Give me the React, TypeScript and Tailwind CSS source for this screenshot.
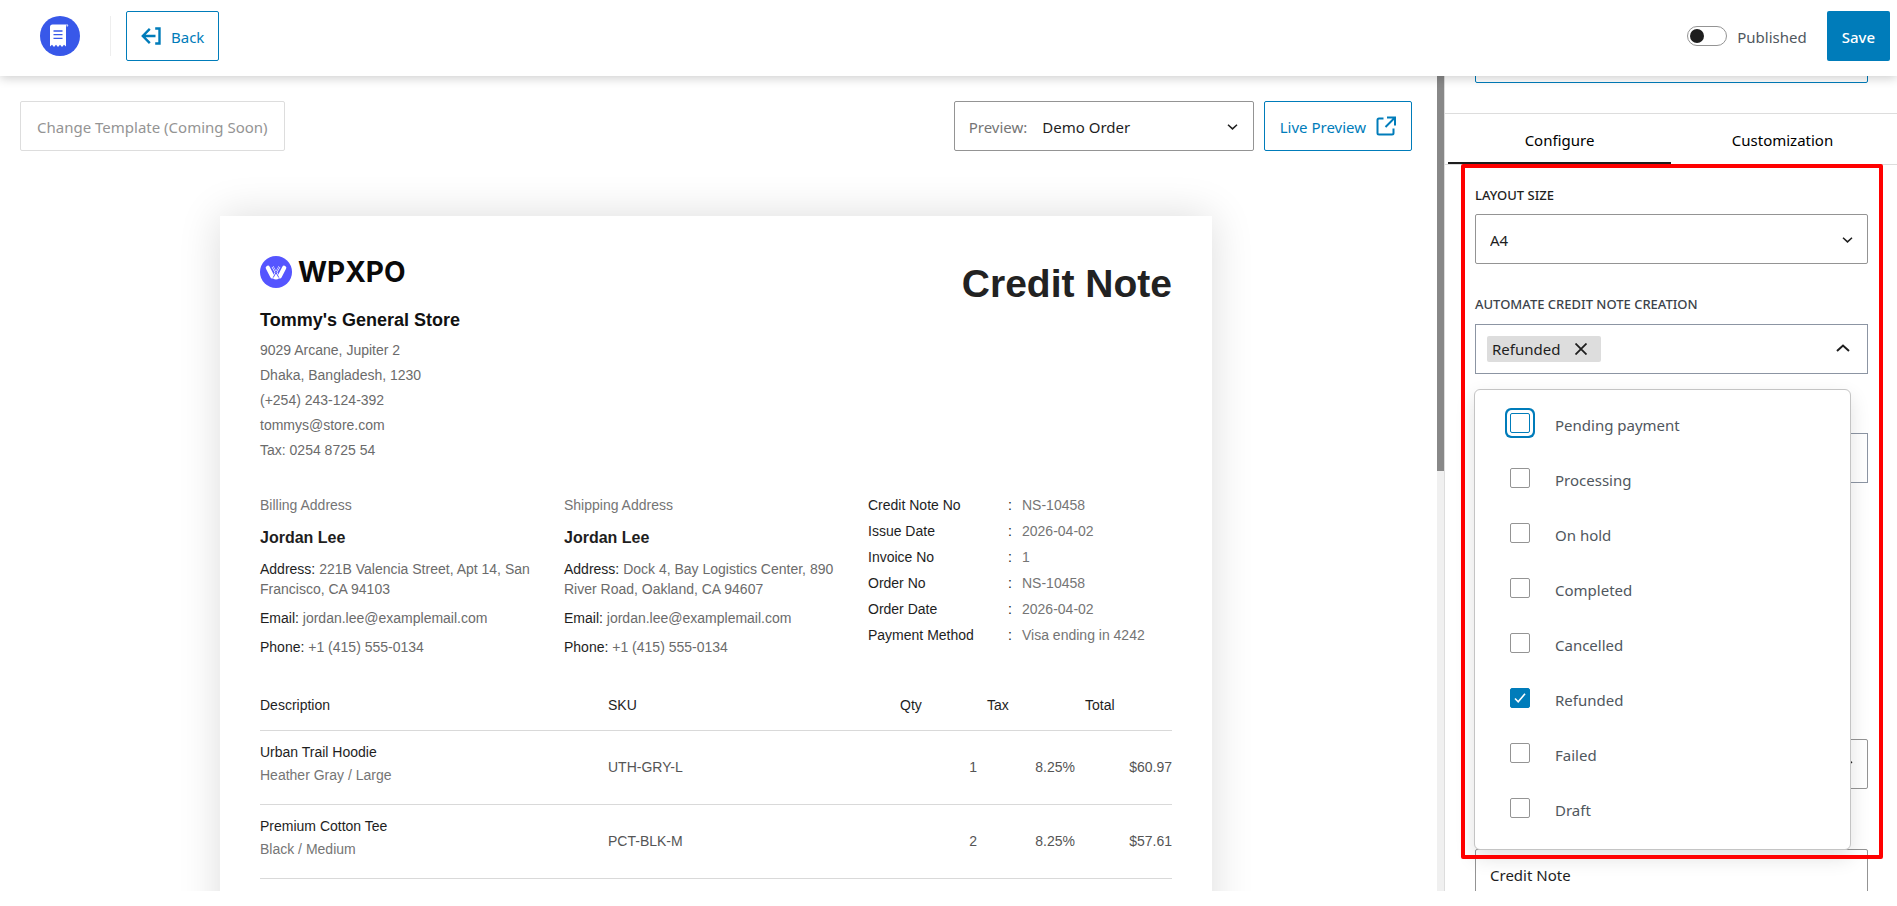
import { useState } from 'react';

const statuses = [
  'Pending payment',
  'Processing',
  'On hold',
  'Completed',
  'Cancelled',
  'Refunded',
  'Failed',
  'Draft',
];

const storeLines = [
  '9029 Arcane, Jupiter 2',
  'Dhaka, Bangladesh, 1230',
  '(+254) 243-124-392',
  'tommys@store.com',
  'Tax: 0254 8725 54',
];

const noteDetails = [
  ['Credit Note No', 'NS-10458'],
  ['Issue Date', '2026-04-02'],
  ['Invoice No', '1'],
  ['Order No', 'NS-10458'],
  ['Order Date', '2026-04-02'],
  ['Payment Method', 'Visa ending in 4242'],
];

const items = [
  { name: 'Urban Trail Hoodie', variant: 'Heather Gray / Large', sku: 'UTH-GRY-L', qty: 1, tax: '8.25%', total: '$60.97' },
  { name: 'Premium Cotton Tee', variant: 'Black / Medium', sku: 'PCT-BLK-M', qty: 2, tax: '8.25%', total: '$57.61' },
];

function LogoIcon() {
  return (
    <svg viewBox="0 0 40 40" className="size-10" aria-hidden="true">
      <circle cx="20" cy="20" r="20" fill="#3858e9" />
      <path d="M10 11Q10 8.500 12.500 8.500H27Q25.800 9.500 26 12V30.500L24 28.800L22 31L20 28.800L18 31L16 28.800L14 31L12 28.800L10 30.500Z" fill="#fff" />
      <path d="M27 8.500Q28.500 9 27.300 10.500" stroke="#fff" strokeWidth="1" fill="none" />
      <path d="M13.500 15H22.500M13.500 18.700H22.500M13.500 22.400H22.500" stroke="#3858e9" strokeWidth="1.300" />
    </svg>
  );
}

function BackIcon() {
  return (
    <svg viewBox="0 0 20 20" className="size-5" fill="none" stroke="currentColor" strokeWidth="2.400" aria-hidden="true">
      <path d="M14.500 10H1.500M8.800 2.800L1.800 10L8.800 17.200M14.200 2.500H18.500V17.500H14.200" />
    </svg>
  );
}

function ExternalIcon() {
  return (
    <svg viewBox="0 0 20 20" className="size-5" fill="none" stroke="currentColor" strokeWidth="2" aria-hidden="true">
      <path d="M7.500 2.500H3Q1.500 2.500 1.500 4V17Q1.500 18.500 3 18.500H16Q17.500 18.500 17.500 17V12.500M11 1.500H19V9.500M19 1.500L9.500 11" />
    </svg>
  );
}

function Chevron({ up = false }: { up?: boolean }) {
  return (
    <svg viewBox="0 0 14 8" className={up ? 'h-2 w-3.5 rotate-180' : 'h-1.5 w-[11px]'} fill="none" stroke="#1e1e1e" strokeWidth="2" aria-hidden="true">
      <path d="M1 1L7 6.500L13 1" />
    </svg>
  );
}

function WpxpoMark() {
  return (
    <svg viewBox="0 0 32 32" className="size-8" aria-hidden="true">
      <circle cx="16" cy="16" r="16" fill="#5555ff" />
      <path d="M7.800 11.800L12.200 20.300M24.200 11.800L19.800 20.300" stroke="#fff" strokeWidth="4.200" strokeLinecap="round" />
      <path d="M12.500 10.500L15.800 16.500L13.500 21M19.500 10.500L16.200 16.500L18.500 21" stroke="#fff" strokeWidth="2" strokeLinejoin="round" fill="none" />
      <path d="M16 17.500L19 22.500Q16 24.500 13 22.500Z" fill="#fff" />
      <path d="M12.300 10L18.800 21.500M19.700 10L13.200 21.500" stroke="#5555ff" strokeWidth="1" />
    </svg>
  );
}

function Address({ title, children }: { title: string; children: React.ReactNode }) {
  return (
    <div className="pr-6">
      <p className="text-[#757575]">{title}</p>
      <p className="mt-[13px] text-base leading-5 font-bold text-[#1e1e1e]">Jordan Lee</p>
      <p className="mt-[11px] text-[#6b6b6b]">
        <span className="text-[#1e1e1e]">Address:</span> {children}
      </p>
      <p className="mt-[9px] text-[#6b6b6b]">
        <span className="text-[#1e1e1e]">Email:</span> jordan.lee@examplemail.com
      </p>
      <p className="mt-[9px] text-[#6b6b6b]">
        <span className="text-[#1e1e1e]">Phone:</span> +1 (415) 555-0134
      </p>
    </div>
  );
}

function Paper() {
  return (
    <article className="mx-auto mt-[65px] w-full max-w-[992px] bg-white px-10 pt-10 pb-20 font-['Liberation_Sans',Arial,sans-serif] text-sm leading-5 text-[#1e1e1e] shadow-[0_0_40px_rgba(0,0,0,0.14)]">
      <div className="flex justify-between">
        <div>
          <div className="flex h-8 items-center gap-1.5">
            <WpxpoMark />
            <span className="font-[Inter,Roboto,sans-serif] text-[28px] font-bold text-[#0a0a0a]">WPXPO</span>
          </div>
          <h2 className="mt-5 text-lg leading-6 font-bold text-[#111]">Tommy's General Store</h2>
          <div className="mt-1.5 text-[#6b6b6b]">
            {storeLines.map((line) => (
              <p key={line} className="leading-[25px]">{line}</p>
            ))}
          </div>
        </div>
        <h1 className="mt-1 text-[39px] leading-[48px] font-bold text-[#222]">Credit Note</h1>
      </div>

      <div className="mt-8 grid grid-cols-3">
        <Address title="Billing Address">221B Valencia Street, Apt 14, San Francisco, CA 94103</Address>
        <Address title="Shipping Address">Dock 4, Bay Logistics Center, 890 River Road, Oakland, CA 94607</Address>
        <dl className="flex flex-col gap-1.5">
          {noteDetails.map(([label, value]) => (
            <div key={label} className="flex">
              <dt className="flex w-[144px] justify-between">
                {label}
                <span>:</span>
              </dt>
              <dd className="ml-2.5 text-[#757575]">{value}</dd>
            </div>
          ))}
        </dl>
      </div>

      <table className="mt-7 w-full table-fixed text-left">
        <thead>
          <tr className="h-[45px] border-b border-[#d9d9d9]">
            <th className="pb-1 font-normal">Description</th>
            <th className="w-[292px] pb-1 font-normal">SKU</th>
            <th className="w-[87px] pb-1 font-normal">Qty</th>
            <th className="w-[98px] pb-1 font-normal">Tax</th>
            <th className="w-[87px] pb-1 font-normal">Total</th>
          </tr>
        </thead>
        <tbody>
          {items.map((item) => (
            <tr key={item.sku} className="h-[74px] border-b border-[#d9d9d9] text-[#555]">
              <td className="pb-2">
                <p className="text-[#1e1e1e]">{item.name}</p>
                <p className="mt-[3px] text-[#757575]">{item.variant}</p>
              </td>
              <td>{item.sku}</td>
              <td className="pr-2.5 text-right">{item.qty}</td>
              <td className="pr-2.5 text-right">{item.tax}</td>
              <td className="text-right">{item.total}</td>
            </tr>
          ))}
        </tbody>
      </table>
    </article>
  );
}

interface StatusMenuProps {
  selected: string[];
  onToggle: (status: string) => void;
}

function StatusMenu({ selected, onToggle }: StatusMenuProps) {
  return (
    <div className="absolute top-[65px] right-[17px] -left-px z-10 rounded-md border border-[#c4c4c4] bg-white pt-[5px] pb-3.5 shadow-[0_8px_20px_rgba(0,0,0,0.12)]">
      {statuses.map((status, i) => (
        <label key={status} className="flex h-[55px] items-center gap-[25px] pl-[35px] text-[#50575e]">
          <span className="relative flex">
            <input
              type="checkbox"
              checked={selected.includes(status)}
              onChange={() => onToggle(status)}
              className={`peer size-5 appearance-none rounded-xs border bg-white outline-none checked:border-[#007cba] checked:bg-[#007cba] ${
                i === 0 ? 'border-[#007cba] shadow-[0_0_0_3px_#fff,0_0_0_5px_#007cba]' : 'border-[#949494]'
              }`}
            />
            <svg viewBox="0 0 20 20" className="pointer-events-none absolute inset-0 hidden size-5 peer-checked:block" fill="none" stroke="#fff" strokeWidth="1.600">
              <path d="M5 10.500L8.200 13.700L15 5.800" />
            </svg>
          </span>
          <span className="pt-1.5">{status}</span>
        </label>
      ))}
    </div>
  );
}

function SettingsPanel() {
  const [selected, setSelected] = useState(['Refunded']);

  const toggle = (status: string) => {
    setSelected(selected.includes(status) ? selected.filter((s) => s !== status) : [...selected, status]);
  };

  return (
    <aside className="relative w-[453px] shrink-0 overflow-hidden border-l border-[#ddd] bg-white">
      <div className="pr-[29px] pb-[30px] pl-[30px]">
        <button type="button" aria-label="Rename template" className="-mt-[43px] block h-[50px] w-full rounded-xs border border-[#007cba]" />
      </div>
      <div role="tablist" className="flex h-[52px] border-y border-[#ddd] px-[3px] text-black">
        <button role="tab" aria-selected="true" className="flex-1 border-b-2 border-[#1e1e1e] pt-1">Configure</button>
        <button role="tab" aria-selected="false" className="flex-1 border-b-2 border-transparent pt-1">Customization</button>
      </div>

      <div className="pt-[18px] pr-[29px] pl-[30px] text-[#1e1e1e]">
        <label htmlFor="layout-size" className="block text-[13px] leading-6 font-medium uppercase">Layout size</label>
        <div className="relative mt-[7px]">
          <select id="layout-size" className="h-[50px] w-full appearance-none rounded-xs border border-[#949494] bg-white px-3.5 pt-0.5">
            <option>A4</option>
          </select>
          <span className="pointer-events-none absolute inset-y-0 right-[15px] flex items-center pt-0.5"><Chevron /></span>
        </div>

        <p id="automate-label" className="mt-7 text-[13px] leading-6 font-medium text-[#3c434a] uppercase">Automate credit note creation</p>
        <div className="relative mt-2">
          <div role="group" aria-labelledby="automate-label" className="flex h-[50px] items-center gap-2 border border-[#8c95a3] pr-[17px] pl-[11px]">
            {selected.map((status) => (
              <span key={status} className="flex h-[26px] items-center gap-[15px] rounded-xs bg-[#ddd] pr-3.5 pl-[5px]">
                {status}
                <button type="button" aria-label={`Remove ${status}`} onClick={() => toggle(status)}>
                  <svg viewBox="0 0 12 12" className="size-3" stroke="#1e1e1e" strokeWidth="1.800"><path d="M0.500 0.500L11.500 11.500M11.500 0.500L0.500 11.500" /></svg>
                </button>
              </span>
            ))}
            <button type="button" aria-label="Close list" className="ml-auto pb-0.5"><Chevron up /></button>
          </div>
          <StatusMenu selected={selected} onToggle={toggle} />
        </div>

        <input aria-label="Number prefix" className="mt-[59px] block h-[50px] w-full border border-[#8c95a3] px-3.5" />
        <div className="relative mt-64">
          <select aria-label="Date format" className="block h-[50px] w-full appearance-none rounded-xs border border-[#949494] bg-white px-3.5" />
          <span className="pointer-events-none absolute inset-y-0 right-[15px] flex items-center"><Chevron /></span>
        </div>
        <input aria-label="Document title" defaultValue="Credit Note" className="mt-[60px] block h-[50px] w-full rounded-xs border border-[#949494] px-3.5 pt-0.5" />
      </div>

      <div className="pointer-events-none absolute top-[88px] right-3.5 left-4 z-20 h-[695px] rounded-xs border-4 border-[#ff0000]" />
    </aside>
  );
}

export default function App() {
  return (
    <div className="flex h-screen flex-col overflow-hidden bg-white pb-[15px] font-['Segoe_UI','Noto_Sans',sans-serif] text-[15px] text-[#1e1e1e]">
      <header className="relative z-30 flex h-[76px] shrink-0 items-start bg-white pt-[11px] pr-[7px] pl-10 shadow-[0_2px_10px_rgba(0,0,0,0.2)]">
        <div className="mt-[5px] flex h-10 items-center border-r border-[#eee] pr-[30px]"><LogoIcon /></div>
        <button type="button" className="ml-[15px] flex h-[50px] items-center gap-2.5 rounded-xs border border-[#007cba] px-3.5 text-[#007cba]">
          <BackIcon />
          <span className="pt-0.5">Back</span>
        </button>
        <div className="ml-auto flex items-center">
          <label className="flex items-center gap-2.5 text-[#50575e]">
            <input
              type="checkbox"
              role="switch"
              className="h-5 w-10 appearance-none rounded-full border border-[#949494] bg-white before:m-0.5 before:block before:size-3.5 before:rounded-full before:bg-[#1e1e1e]"
            />
            <span className="pt-0.5">Published</span>
          </label>
          <button type="button" className="ml-5 h-[50px] rounded-xs bg-[#007cba] px-[15px] pt-0.5 font-medium text-white">Save</button>
        </div>
      </header>

      <div className="flex min-h-0 flex-1">
        <main className="min-w-0 flex-1 overflow-hidden bg-white pt-[25px] pr-[25px] pl-5">
          <div className="flex items-center">
            <button type="button" disabled className="h-[50px] rounded-xs border border-[#ddd] px-4 pt-0.5 text-[#949494]">Change Template (Coming Soon)</button>
            <label className="relative ml-auto flex h-[50px] w-[300px] items-center rounded-xs border border-[#949494] pt-0.5 pl-3.5 text-[#757575]">
              Preview:
              <select className="h-full flex-1 appearance-none px-[15px] text-[#1e1e1e]">
                <option>Demo Order</option>
              </select>
              <span className="pointer-events-none absolute inset-y-0 right-[15px] flex items-center pt-0.5"><Chevron /></span>
            </label>
            <button type="button" className="ml-2.5 flex h-[50px] items-center gap-2.5 rounded-xs border border-[#007cba] px-[15px] text-[#007cba]">
              <span className="pt-0.5">Live Preview</span>
              <ExternalIcon />
            </button>
          </div>
          <Paper />
        </main>
        <div className="w-[7px] shrink-0 bg-[#f0f0f0]">
          <div className="h-[395px] bg-[#888]" />
        </div>
        <SettingsPanel />
      </div>
    </div>
  );
}
